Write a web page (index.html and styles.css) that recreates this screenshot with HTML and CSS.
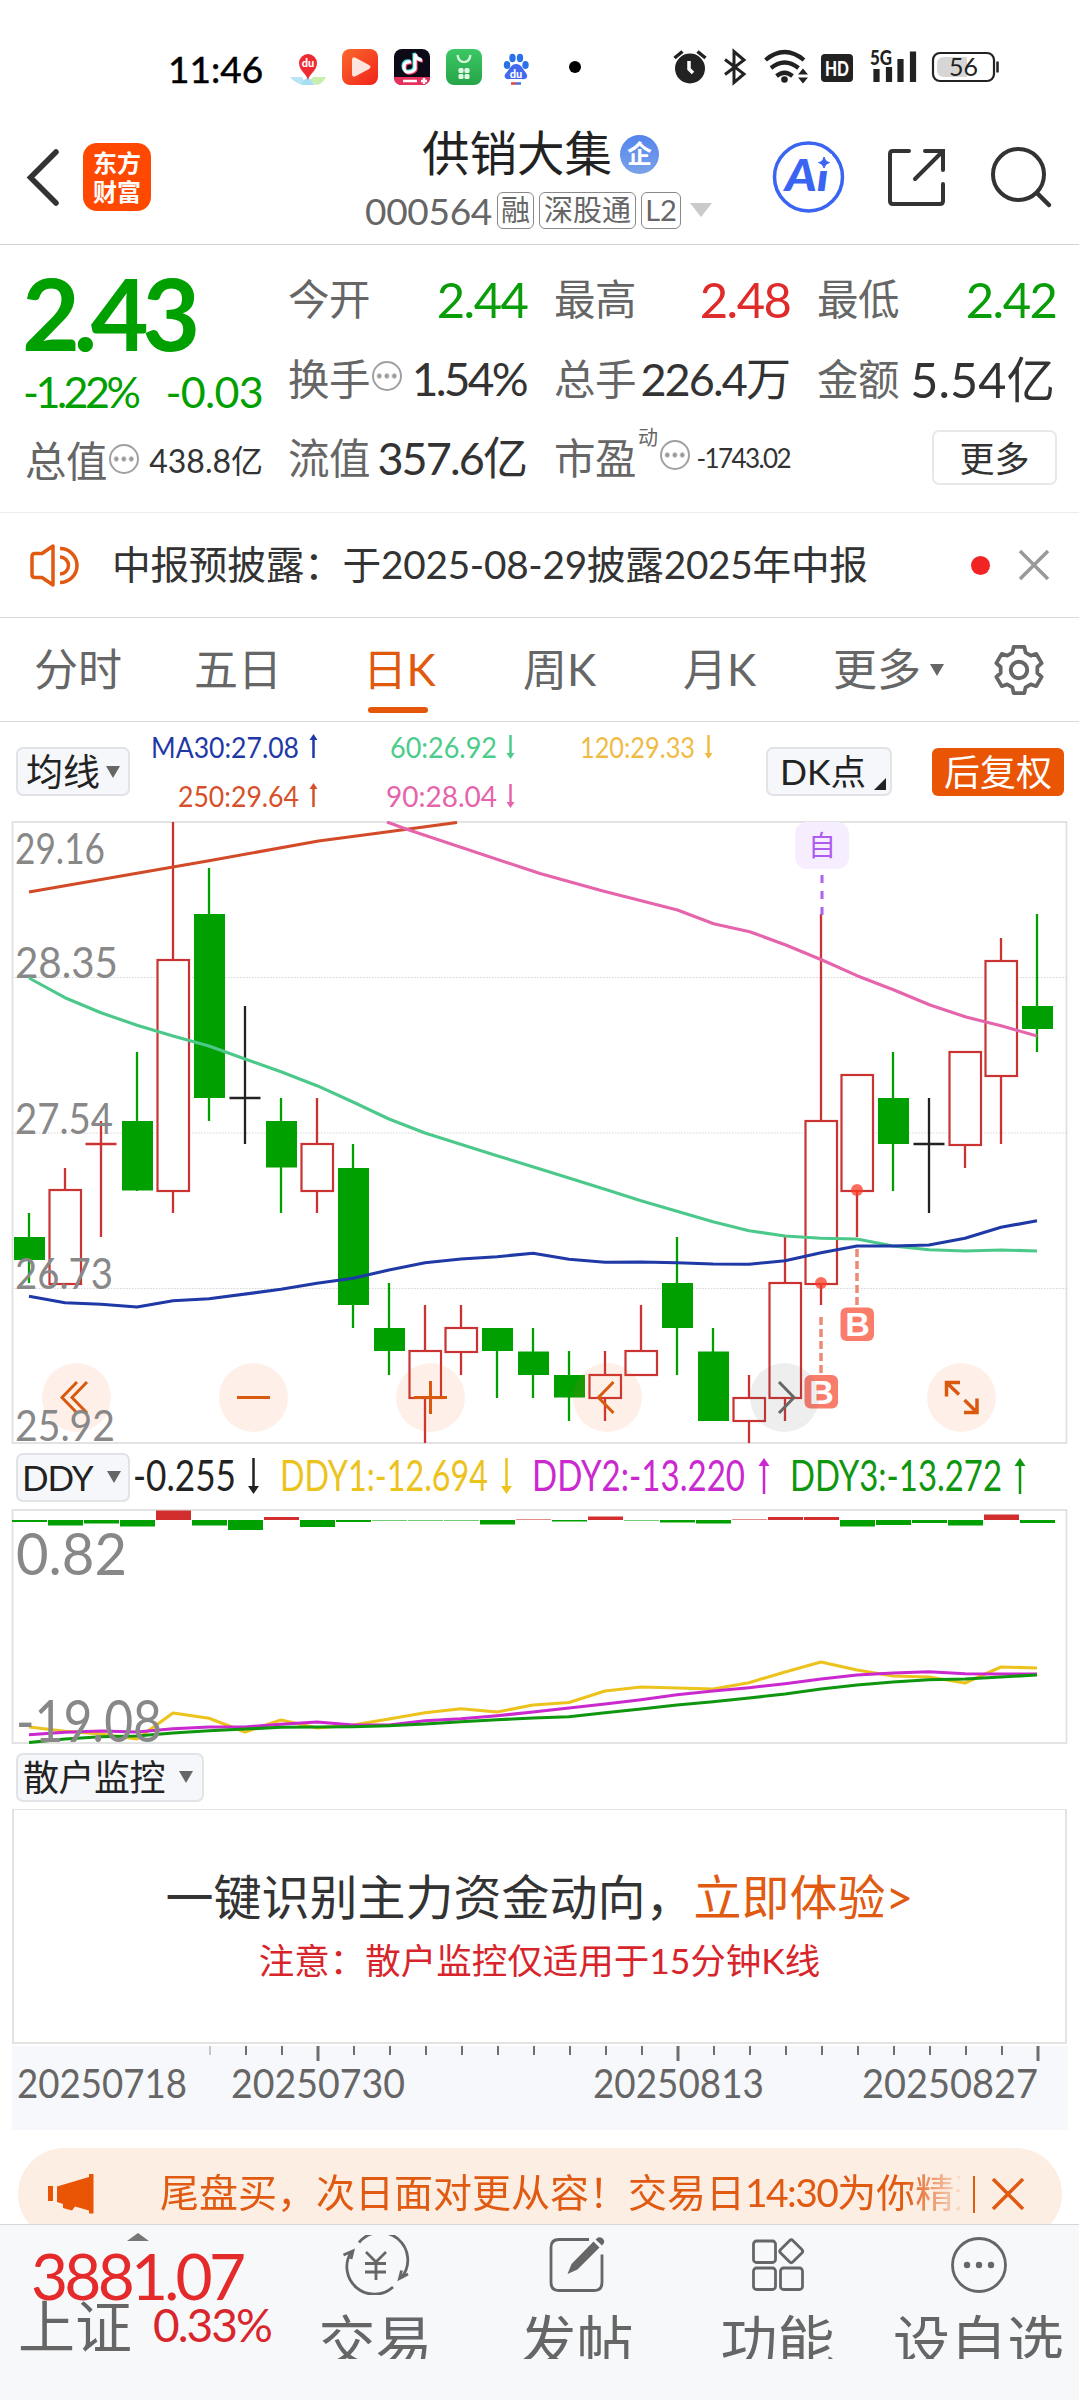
FILE: index.html
```html
<!DOCTYPE html>
<html lang="zh-CN">
<head>
<meta charset="utf-8">
<title>供销大集 000564</title>
<link rel="stylesheet" href="styles.css">
</head>
<body>
<div class="screen">

  <div class="status">
    <span class="clock">11:46</span>
    <svg class="status-icons" width="819" height="60" viewBox="260 40 819 60">
      <defs>
        <linearGradient id="gPlay" x1="0" y1="0" x2="1" y2="1"><stop offset="0" stop-color="#fb6a2c"/><stop offset="1" stop-color="#f0221a"/></linearGradient>
        <linearGradient id="gShop" x1="0" y1="0" x2="0" y2="1"><stop offset="0" stop-color="#3cc765"/><stop offset="1" stop-color="#27a548"/></linearGradient>
      </defs>
      <path d="M290 79h12l4 8q-11-1-16-8z" fill="#b9e4f5"/><path d="M313 79h13q-3 7-10 8l-6-5z" fill="#c8efb0"/><path d="M304 82l4-3 7 8h-14z" fill="#a8def2"/>
      <path d="M308 82c-1-6-9-9-9-17a9 9 0 0 1 18 0c0 8-8 11-9 17z" fill="#ee2b33"/>
      <text x="308" y="69" class="mini-du" fill="#fff">du</text>
      <rect x="342" y="51" width="36" height="36" rx="8" fill="url(#gPlay)"/><path d="M352 62q0-4 4-2l13 7q3 2 0 4l-13 7q-4 2-4-2z" fill="#fff" opacity=".85"/>
      <rect x="394" y="51" width="36" height="36" rx="8" fill="#0c0a16"/>
      <path d="M394 79h36q0 8-8 8h-20q-8 0-8-8z" fill="#e8305e"/>
      <g fill="none" stroke-width="3.2"><path d="M411 64q-7-1-7 5t6 5 5-6v-12q2 6 7 6" stroke="#3be2e6" transform="translate(-1 -1)"/><path d="M411 64q-7-1-7 5t6 5 5-6v-12q2 6 7 6" stroke="#f2406a" transform="translate(1 1)"/><path d="M411 64q-7-1-7 5t6 5 5-6v-12q2 6 7 6" stroke="#fff"/></g>
      <path d="M403 83h14M424 80v6M421 83h6" stroke="#fff" stroke-width="2.4"/>
      <rect x="446" y="51" width="36" height="36" rx="8" fill="url(#gShop)"/>
      <path d="M457.500 57q1 7 6.500 7t6.500-7" fill="none" stroke="#d8f8df" stroke-width="2.200"/>
      <g fill="#e2fbe8"><rect x="458.500" y="70" width="5" height="5" rx="1.500"/><rect x="464.500" y="70" width="5" height="5" rx="1.500"/><rect x="458.500" y="76" width="5" height="5" rx="1.500"/><rect x="464.500" y="76" width="5" height="5" rx="1.500"/></g>
      <g fill="#2a72ea"><ellipse cx="507" cy="67" rx="3.200" ry="4"/><ellipse cx="512.500" cy="60" rx="3.200" ry="4.200"/><ellipse cx="520" cy="60" rx="3.200" ry="4.200"/><ellipse cx="525.500" cy="67" rx="3.200" ry="4"/></g>
      <path d="M516 66c5 0 7 5 10 9s0 7-4 6h-12c-5 1-7-3-4-6s5-9 10-9z" fill="#4468ee"/>
      <text x="516" y="80" class="mini-du" fill="#fff">du</text>
      <path d="M511 85.500h5" stroke="#d4483f" stroke-width="2.500"/><path d="M516 85.500h5" stroke="#4a6fe0" stroke-width="2.500"/>
      <circle cx="575" cy="69" r="6" fill="#000"/>
      <g fill="#222">
        <circle cx="690" cy="70.500" r="15"/>
        <path d="M674.500 60l8-6.500M705.500 60l-8-6.500" stroke="#222" stroke-width="3.500"/>
        <path d="M689 63v8l4 4" fill="none" stroke="#fff" stroke-width="3.500"/>
        <path d="M725 61.500l19 14.500-10 8.500v-31l10 8.500-19 14.500" fill="none" stroke="#222" stroke-width="3"/>
        <g fill="none" stroke="#222" stroke-width="4.200"><path d="M765.500 62q19-16 38.500 0"/><path d="M771 70q13.500-11 27.500 0"/><path d="M776.500 78q8-6.500 16 0"/></g>
        <circle cx="784.500" cy="81.500" r="3.300"/>
        <path d="M798 76.500l5-6 5 6zM798 79.500l5 6 5-6z"/>
        <rect x="821" y="56" width="32" height="28" rx="4"/>
      </g>
      <text x="837" y="77.500" class="hd" textLength="24" lengthAdjust="spacingAndGlyphs">HD</text>
      <text x="870" y="67" class="five-g" textLength="22" lengthAdjust="spacingAndGlyphs">5G</text>
      <path d="M876.500 71v13M889 69v15M900.500 61v23M913 53.500v30.500" stroke="#222" stroke-width="6.200"/>
      <rect x="933" y="55" width="61" height="28" rx="7" fill="#fff" stroke="#222" stroke-width="2.200"/>
      <path d="M967 59h-23q-7 0-7 7v6q0 7 7 7h23z" fill="#d6d6d6"/>
      <path d="M997.500 63.500v11" stroke="#222" stroke-width="2.500"/>
      <text x="963.500" y="78" class="batt">56</text>
    </svg>
  </div>

  <header class="header">
    <div class="head-left">
      <svg width="34" height="60" viewBox="26 147 34 60"><path d="M56 152L30.500 177.500L56 203" fill="none" stroke="#333" stroke-width="5.500" stroke-linecap="round"/></svg>
      <div class="logo"><span>东方</span><span>财富</span></div>
    </div>
    <div class="head-mid">
      <div class="title-row"><h1>供销大集</h1><span class="ent">企</span></div>
      <div class="code-row"><span class="code">000564</span><span class="tag">融</span><span class="tag wide">深股通</span><span class="tag l2">L2</span><i class="caret"></i></div>
    </div>
    <svg class="head-right" width="307" height="80" viewBox="772 137 307 80">
      <circle cx="808.500" cy="177" r="34" fill="#fff" stroke="#3a64f2" stroke-width="3.500"/>
      <text x="785" y="191" class="ai" textLength="44" lengthAdjust="spacingAndGlyphs">Ai</text>
      <path d="M817 154h15v17h-15z" fill="#fff"/><path d="M824 157q1.500 5 5.500 5.500q-4.500 1-5.500 5.500q-1-4.500-5.500-5.500q4.500-.5 5.500-5.500z" fill="#3a64f2" stroke="#3a64f2" stroke-width="1"/>
      <g fill="none" stroke="#333" stroke-width="4" stroke-linecap="round"><path d="M909 151h-16q-3 0-3 3v47q0 3 3 3h47q3 0 3-3v-17"/><path d="M925 151h18v19M942 152l-27 27"/></g>
      <circle cx="1018.500" cy="174.500" r="25.500" fill="none" stroke="#333" stroke-width="4"/><path d="M1037 193l12 12" stroke="#333" stroke-width="4.500" stroke-linecap="round"/>
    </svg>
  </header>

  <section class="quote">
    <div class="price-col">
      <div class="price">2.43</div>
      <div class="change"><span class="pct">-1.22%</span><span class="diff">-0.03</span></div>
      <div class="cell r3"><label>总值</label><i class="info"></i><b class="v32">438.8亿</b></div>
    </div>
    <div class="stats">
      <div class="cell"><label>今开</label><b class="v49 down">2.44</b></div>
      <div class="cell"><label>最高</label><b class="v49 up">2.48</b></div>
      <div class="cell"><label>最低</label><b class="v49 down">2.42</b></div>
      <div class="cell"><label>换手</label><i class="info"></i><b class="v46">1.54%</b></div>
      <div class="cell"><label>总手</label><b class="v45">226.4万</b></div>
      <div class="cell"><label>金额</label><b class="v48">5.54亿</b></div>
      <div class="cell r3"><label>流值</label><b class="v45">357.6亿</b></div>
      <div class="cell r3"><label>市盈</label><sup>动</sup><i class="info"></i><b class="v26">-1743.02</b></div>
      <div class="cell r3"><button class="more-btn">更多</button></div>
    </div>
  </section>

  <section class="notice">
    <svg width="54" height="48" viewBox="28 540 54 48" fill="none" stroke="#e05a12" stroke-width="3.500" stroke-linejoin="round"><path d="M53 545v39l-11-7.500h-7q-3 0-3-3v-18q0-3 3-3h7z"/><path d="M60 547.500a16.500 16.500 0 0 1 0 34M60 556a8.500 8.500 0 0 1 0 17"/></svg>
    <p>中报预披露：于2025-08-29披露2025年中报</p>
    <i class="dot"></i>
    <svg width="32" height="32" viewBox="0 0 32 32"><path d="M2 2l28 28M30 2L2 30" stroke="#999" stroke-width="3.500"/></svg>
  </section>

  <nav class="tabs">
    <span>分时</span><span>五日</span><span class="on">日K</span><span>周K</span><span>月K</span><span class="more">更多<i class="tri"></i></span>
    <svg width="54" height="54" viewBox="-27 -27 54 54" fill="none" stroke="#666" stroke-width="4"><path transform="scale(.94)" stroke-linejoin="round" d="M-7-18.500L-5.700-24.500H5.700L7-18.500L12.500-15.300L18.400-17.200L24.100-7.300L19.500-3.200V3.200L24.100 7.300L18.400 17.200L12.500 15.300L7 18.500L5.700 24.500H-5.700L-7 18.500L-12.500 15.300L-18.400 17.200L-24.100 7.300L-19.500 3.200V-3.200L-24.100-7.300L-18.400-17.200L-12.500-15.300Z"/><circle r="8.200"/></svg>
  </nav>

  <section class="toolbar">
    <button class="chip">均线<i class="tri"></i></button>
    <svg class="legend" width="580" height="99" viewBox="145 722 580 99">
      <g fill="#1f39a6" stroke="#1f39a6"><text x="151" y="757.500" textLength="148" lengthAdjust="spacingAndGlyphs">MA30:27.08</text><path d="M313.500 738v20"/><path class="tip" d="M309.500 740l4-6 4 6z"/></g>
      <g fill="#4ccb8a" stroke="#4ccb8a"><text x="390" y="757.500" textLength="107" lengthAdjust="spacingAndGlyphs">60:26.92</text><path d="M510.500 735v20"/><path class="tip" d="M506.500 753l4 6 4-6z"/></g>
      <g fill="#efbb45" stroke="#efbb45"><text x="580" y="757.500" textLength="115" lengthAdjust="spacingAndGlyphs">120:29.33</text><path d="M708.500 735v20"/><path class="tip" d="M704.500 753l4 6 4-6z"/></g>
      <g fill="#d6502b" stroke="#d6502b"><text x="178" y="806.500" textLength="121" lengthAdjust="spacingAndGlyphs">250:29.64</text><path d="M313.500 787v20"/><path class="tip" d="M309.500 789l4-6 4 6z"/></g>
      <g fill="#e564ab" stroke="#e564ab"><text x="386" y="806.500" textLength="111" lengthAdjust="spacingAndGlyphs">90:28.04</text><path d="M510.500 784v20"/><path class="tip" d="M506.500 802l4 6 4-6z"/></g>
    </svg>
    <button class="chip dk">DK点<i class="corner"></i></button>
    <button class="adj">后复权</button>
  </section>

  <svg class="plot" width="1079" height="623" viewBox="0 821 1079 623">
    <rect x="12.500" y="822" width="1054" height="621" fill="#fff" stroke="#e0e0e0" stroke-width="1.800"/>
    <path d="M12 977.500H1067M12 1133H1067M12 1288.500H1067" stroke="#d4d4d4" stroke-width="1" stroke-dasharray="1.500 1.500"/>
    <g id="candles"></g>
    <g class="axis" font-size="43">
      <text x="15" y="864" textLength="90" lengthAdjust="spacingAndGlyphs">29.16</text>
      <text x="15" y="977.500" textLength="103" lengthAdjust="spacingAndGlyphs">28.35</text>
      <text x="15" y="1133.500" textLength="98" lengthAdjust="spacingAndGlyphs">27.54</text>
      <text x="15" y="1289" textLength="98" lengthAdjust="spacingAndGlyphs">26.73</text>
    </g>
    <g id="averages" fill="none" stroke-width="3.100" stroke-linejoin="round"></g>
    <rect x="795" y="822" width="54" height="47" rx="12" fill="#f6edff"/>
    <text x="822" y="856" class="zi">自</text>
    <path d="M822 875v40" stroke="#ad63ec" stroke-width="3" stroke-dasharray="8 8"/>
    <g stroke="#ef8877" stroke-width="3.500" stroke-dasharray="8 4"><path d="M857 1249v56M821 1317v57"/></g>
    <g fill="#fb3c28" fill-opacity=".75"><circle cx="857" cy="1190" r="6"/><circle cx="821" cy="1283" r="6"/></g>
    <g fill="#fa7d6c"><rect x="840.500" y="1307.500" width="33.500" height="33.500" rx="6"/><rect x="804.500" y="1375" width="33.500" height="33.500" rx="6"/></g>
    <text x="857.500" y="1336" class="buy">B</text><text x="821.500" y="1403.500" class="buy">B</text>
    <g fill="#f96a1e" fill-opacity=".1"><circle cx="76.500" cy="1397.500" r="34.500"/><circle cx="253.500" cy="1397.500" r="34.500"/><circle cx="430.500" cy="1397.500" r="34.500"/><circle cx="607.500" cy="1397.500" r="34.500"/><circle cx="784.500" cy="1397.500" r="34.500" fill="#555"/><circle cx="961.500" cy="1397.500" r="34.500"/></g>
    <g fill="none" stroke="#d9590f" stroke-width="3"><path d="M77 1382l-15 15.500 15 15.500M87 1382l-15 15.500 15 15.500"/><path d="M237 1397.500h33M414 1397.500h33M430.500 1381v33"/><path d="M613.500 1382l-15 15.500 15 15.500"/><path d="M779 1382l15 15.500-15 15.500" stroke="#666"/></g>
    <g fill="none" stroke="#d9590f" stroke-width="3.500"><path d="M960 1382.500h-13.500v14M947 1383l12 11.500M964 1412.500h13v-14M976.500 1412l-12-12"/></g>
    <text class="axis" font-size="43" x="15" y="1441" textLength="100" lengthAdjust="spacingAndGlyphs">25.92</text>
  </svg>

  <section class="sub-head">
    <button class="chip">DDY<i class="tri"></i></button>
    <svg class="ddy" width="949" height="60" viewBox="130 1446 949 60">
      <g fill="#222" stroke="#222"><text x="133" y="1491" textLength="103" lengthAdjust="spacingAndGlyphs">-0.255</text><path d="M253.500 1458v30"/><path class="tip" d="M248 1486h11l-5.500 8z"/></g>
      <g fill="#ecc31d" stroke="#ecc31d"><text x="280" y="1491" textLength="208" lengthAdjust="spacingAndGlyphs">DDY1:-12.694</text><path d="M506.500 1458v30"/><path class="tip" d="M501 1486h11l-5.500 8z"/></g>
      <g fill="#ca29cf" stroke="#ca29cf"><text x="532" y="1491" textLength="213" lengthAdjust="spacingAndGlyphs">DDY2:-13.220</text><path d="M764 1464v30"/><path class="tip" d="M758.500 1466h11l-5.500-8z"/></g>
      <g fill="#0f960f" stroke="#0f960f"><text x="790" y="1491" textLength="212" lengthAdjust="spacingAndGlyphs">DDY3:-13.272</text><path d="M1020 1464v30"/><path class="tip" d="M1014.500 1466h11l-5.500-8z"/></g>
    </svg>
  </section>

  <svg class="plot" width="1079" height="235" viewBox="0 1509 1079 235">
    <rect x="12.500" y="1510" width="1054" height="233" fill="#fff" stroke="#e0e0e0" stroke-width="1.800"/>
    <g id="bars"></g>
    <g id="ddyLines" fill="none" stroke-width="3.100" stroke-linejoin="round"></g>
    <g class="axis" font-size="59">
      <text x="16" y="1575" textLength="111" lengthAdjust="spacingAndGlyphs">0.82</text>
      <text x="16" y="1742" textLength="146" lengthAdjust="spacingAndGlyphs">-19.08</text>
    </g>
  </svg>

  <section class="sub-head third"><button class="chip">散户监控<i class="tri"></i></button></section>

  <section class="promo">
    <p class="big">一键识别主力资金动向，<a>立即体验&gt;</a></p>
    <p class="note">注意：散户监控仅适用于15分钟K线</p>
  </section>

  <svg class="dates" width="1079" height="84" viewBox="0 2046 1079 84">
    <rect x="12" y="2046" width="1056" height="84" fill="#f7f8fb"/>
    <g id="ticks" stroke="#6e6e6e"></g>
    <text x="17" y="2098" textLength="170" lengthAdjust="spacingAndGlyphs">20250718</text>
    <text x="231" y="2098" textLength="174" lengthAdjust="spacingAndGlyphs">20250730</text>
    <text x="593" y="2098" textLength="171" lengthAdjust="spacingAndGlyphs">20250813</text>
    <text x="862" y="2098" textLength="176" lengthAdjust="spacingAndGlyphs">20250827</text>
  </svg>

  <div class="ad-clip">
    <div class="ad">
      <svg width="46" height="40" viewBox="48 2173 46 40" fill="#e95504"><path d="M48 2185h5v15h-5zM57 2185.500l32-9.500v-3h4.500v39.500h-4.500v-3l-14-4-3 4-9-2.500v-4l-6-2z"/></svg>
      <p>尾盘买，次日面对更从容！交易日<span>14:30</span>为你精选</p>
      <i class="bar"></i>
      <svg width="32" height="32" viewBox="0 0 32 32"><path d="M1 1l30 30M31 1L1 31" stroke="#e05a12" stroke-width="3.500"/></svg>
    </div>
  </div>

  <footer class="bottom">
    <div class="index">
      <i class="up-tri"></i>
      <div class="idx-val">3881.07</div>
      <div class="idx-row"><span>上证</span><b>0.33%</b></div>
    </div>
    <div class="nav">
      <svg width="70" height="60" viewBox="341 2234 70 60" fill="none" stroke="#666" stroke-width="2.800"><path d="M359 2241.500a27.500 27.500 0 0 1 42.500 35"/><path d="M393 2286a27.500 27.500 0 0 1-41.500-35.500"/><path d="M343.500 2254l9.500-4-2 8M408 2273l-8.500 4.500 2-8"/><path d="M366 2251l10 10 10-10M376 2261v18M365 2262.500h21M365 2271h21"/></svg>
      <span>交易</span>
    </div>
    <div class="nav">
      <svg width="60" height="60" viewBox="547 2234 60 60" fill="none" stroke="#666" stroke-width="2.800"><path d="M589 2238.500h-30q-8 0-8 8v35q0 8 8 8h35q8 0 8-8v-28"/><path d="M567.500 2273l4-10 22-22.500 6 6-22 22z" fill="#666" stroke="none"/><path d="M595.500 2238.500l2.500-2q4-1 6 3 1 2-2 5z" fill="#666" stroke="none"/></svg>
      <span>发帖</span>
    </div>
    <div class="nav">
      <svg width="60" height="60" viewBox="748 2234 60 60" fill="none" stroke="#666" stroke-width="2.800"><rect x="753.500" y="2240" width="22" height="21.500" rx="3"/><rect x="753.500" y="2267" width="22" height="21.500" rx="3"/><rect x="780.500" y="2267" width="22" height="21.500" rx="3"/><rect x="782.500" y="2241.500" width="17.500" height="17.500" rx="2.500" transform="rotate(45 791.250 2250.250)"/></svg>
      <span>功能</span>
    </div>
    <div class="nav">
      <svg width="60" height="60" viewBox="949 2234 60 60"><circle cx="979" cy="2264" r="26.500" fill="none" stroke="#666" stroke-width="2.800"/><g fill="#666"><circle cx="967" cy="2264" r="3.200"/><circle cx="979" cy="2264" r="3.200"/><circle cx="991" cy="2264" r="3.200"/></g></svg>
      <span>设自选</span>
    </div>
  </footer>
</div>
<script src="chart.js"></script>
</body>
</html>
```
FILE: styles.css
```css
* { box-sizing: border-box; }
body { margin: 0; background: #fff; font-family: Lato, "Noto Sans CJK SC", sans-serif; color: #333; }
h1, p { margin: 0; font-weight: 400; }
button { font-family: inherit; margin: 0; padding: 0; border: 0; background: none; color: inherit; }
svg { display: block; flex: none; }
.screen { width: 1079px; height: 2400px; overflow: hidden; display: flex; flex-direction: column; }
.screen > * { flex: none; }

.status { height: 104px; display: flex; align-items: center; padding-top: 36px; padding-bottom: 4px; }
.clock { width: 260px; padding-left: 168px; padding-top: 1px; font-size: 37px; line-height: 60px; color: #000; white-space: nowrap; -webkit-text-stroke: .5px #000; letter-spacing: 0; }
.mini-du { font-size: 11px; font-weight: 900; text-anchor: middle; }
.hd { font-size: 21px; font-weight: 900; text-anchor: middle; fill: #fff; }
.five-g { font-size: 20px; font-weight: 900; fill: #222; }
.batt { font-size: 25px; text-anchor: middle; fill: #222; }
.ai { font-size: 43px; font-weight: 900; font-style: italic; fill: #3a64f2; }

.header { height: 141px; border-bottom: 1.500px solid #d2d2d2; display: grid; grid-template-columns: 365px 407px 307px; }
.head-left { display: flex; align-items: center; padding: 5px 0 0 26px; gap: 23px; }
.logo { width: 68px; height: 68px; border-radius: 14px; background: #ff4800; color: #fff; display: flex; flex-direction: column; align-items: center; justify-content: center; font-size: 24px; line-height: 29px; font-weight: 700; }
.head-mid { display: flex; flex-direction: column; padding-top: 19px; }
.title-row { display: flex; align-items: center; height: 60px; padding-left: 57px; gap: 8px; }
h1 { font-size: 47.500px; line-height: 60px; color: #222; }
.ent { width: 39px; height: 39px; margin-top: 2px; border-radius: 50%; background: linear-gradient(#5484ee, #7aa2e8); color: #fff; font-size: 25px; line-height: 37px; text-align: center; font-weight: 700; }
.code-row { display: flex; align-items: center; height: 58px; margin-top: -2px; color: #666; }
.code { font-size: 37px; width: 132px; letter-spacing: -.3px; }
.tag { height: 37px; width: 37px; border: 1.500px solid #888; border-radius: 6px; font-size: 29px; line-height: 33px; text-align: center; margin-right: 5px; white-space: nowrap; }
.tag.wide { width: 97px; }
.tag.l2 { width: 40px; }
.caret { margin-left: 4px; border: 11px solid transparent; border-bottom: 0; border-top: 14px solid #cacaca; }
.head-right { margin-top: 33px; }

.quote { height: 268px; border-bottom: 1.500px solid #ededed; display: grid; grid-template-columns: 263px 766px; column-gap: 25px; }
.price-col { padding: 14px 0 0 25px; color: #00a000; }
.price { font-size: 100px; line-height: 106px; font-weight: 700; letter-spacing: -6.500px; margin-left: -3px; }
.change { display: flex; justify-content: space-between; line-height: 53px; font-size: 43px; }
.pct { letter-spacing: -3.500px; margin-left: -2px; }
.diff { letter-spacing: -.7px; }
.stats { display: grid; grid-template-columns: 238px 235px 238px; column-gap: 28px; grid-template-rows: 107px 53px 107px; }
.cell { display: flex; align-items: center; white-space: nowrap; }
.cell label { font-size: 41.500px; line-height: 60px; color: #666; letter-spacing: -.5px; }
.cell b { margin-left: auto; font-weight: 400; color: #333; line-height: 60px; }
.cell b.down { color: #0a9d0a; }
.cell b.up { color: #e02b2b; }
.price-col .r3 { height: 86px; }
.stats .r3 { height: 105px; }
.info { width: 30px; height: 30px; margin-left: 2px; margin-top: -5px; border-radius: 50%; border: 2.500px solid #a0a0a0; background: radial-gradient(circle, #999 2px, transparent 2.700px) center / 7.500px 25px content-box; padding: 0 1.200px; }
.v49 { font-size: 49px; letter-spacing: -1.500px; margin-right: -1.500px; }
.cell .v48 { font-size: 48.500px; letter-spacing: .1px; }
.cell .v46 { font-size: 46px; letter-spacing: -2.700px; margin-right: 0; }
.v45 { font-size: 45px; letter-spacing: -1.900px; margin-right: 0; }
.v32 { font-size: 32px; }
.v26 { font-size: 26px; letter-spacing: -1.600px; margin-right: -1px; }
.cell sup { font-size: 20px; line-height: 20px; margin: -42px 0 0 2px; color: #666; vertical-align: baseline; }
.more-btn { width: 125px; height: 55px; margin: 0 -2px 0 auto; border: 2px solid #e8e8e8; border-radius: 7px; font-size: 35px; line-height: 50px; color: #333; }

.notice { height: 105px; border-bottom: 1.500px solid #dadada; display: flex; align-items: center; padding: 0 28px; }
.notice p { margin-left: 30px; width: 859px; padding-bottom: 2px; font-size: 38.700px; line-height: 60px; letter-spacing: -.25px; white-space: nowrap; }
.dot { width: 19px; height: 19px; border-radius: 50%; background: #f22323; margin-right: 28px; }

.tabs { height: 104px; border-bottom: 1.500px solid #dadada; display: grid; grid-template-columns: 160px 173px 156px 160px 150px 159px 1fr; padding-left: 34px; font-size: 44px; line-height: 101px; color: #666; align-items: center; white-space: nowrap; }
.tabs .on { color: #e05a0e; position: relative; margin-left: -4px; letter-spacing: -.5px; }
.tabs .on::after { content: ""; position: absolute; left: 5px; top: 88px; width: 60px; height: 6px; border-radius: 4px; background: #e4560a; }
.tri { display: inline-block; border: 7.500px solid transparent; border-bottom: 0; border-top: 12px solid #666; }
.tabs .tri { margin-left: 9px; vertical-align: 10px; }

.toolbar { height: 99px; display: flex; padding-left: 16px; align-items: flex-start; }
.chip { height: 49px; border: 2px solid #e1e3e6; border-radius: 7px; background: #f6f7fa; color: #222; font-size: 37px; line-height: 44px; display: flex; align-items: center; white-space: nowrap; }
.toolbar .chip { width: 114px; margin-top: 25px; padding-left: 8px; gap: 6px; }
.legend { margin-left: 15px; font-size: 29px; }
.legend path, .ddy path { stroke-width: 2.500px; }
svg text { stroke: none; }
.legend .tip, .ddy .tip { stroke: none; }
.toolbar .dk { width: 126px; margin-left: 41px; padding-left: 12px; font-size: 35.500px; position: relative; }
.dk .corner { position: absolute; right: 4px; bottom: 4px; border-left: 12px solid transparent; border-bottom: 12px solid #222; }
.adj { margin: 26px 0 0 40px; width: 132px; height: 48px; border-radius: 6px; background: #e95504; color: #fff; font-size: 36px; line-height: 45px; }

.axis { fill: #888; }
.zi { font-size: 28px; text-anchor: middle; fill: #ad5cf0; }
.buy { font-size: 34px; font-weight: 700; text-anchor: middle; fill: #fff; font-family: "Liberation Sans", sans-serif; }

.sub-head { height: 65px; display: flex; padding: 9px 0 0 16px; }
.sub-head .chip { width: 114px; padding: 0 0 2px 4px; font-size: 35px; gap: 14px; letter-spacing: -1px; }
.ddy { margin-top: -7px; font-size: 42px; }
.third .chip { width: 188px; letter-spacing: -.5px; font-size: 36px; padding-left: 5px; }

.promo { height: 235px; margin: 0 12px; border: 2px solid #e3e3e3; border-top-width: 1px; text-align: center; padding-top: 57px; }
.big { font-size: 48px; line-height: 60px; white-space: nowrap; }
.big a { color: #e05a12; }
.note { margin-top: 4px; font-size: 35.500px; line-height: 60px; color: #d8252b; }

.dates { margin-top: 2px; font-size: 40px; fill: #666; }

.ad-clip { height: 94px; padding: 18px 17px 0 18px; overflow: hidden; }
.ad { height: 92px; border-radius: 46px; background: #fdeee4; display: flex; align-items: center; padding-left: 30px; color: #e05a12; }
.ad p { margin-left: 66px; width: 800px; font-size: 39px; line-height: 60px; white-space: nowrap; overflow: hidden; -webkit-mask-image: linear-gradient(90deg, #000 745px, transparent 808px); mask-image: linear-gradient(90deg, #000 745px, transparent 808px); padding-bottom: 4px; }
.ad p span { letter-spacing: -1.600px; }
.ad .bar { width: 1.500px; height: 37px; margin: 0 17px 0 13px; background: #e05a12; }

.bottom { height: 176px; border-top: 1.500px solid #d4d8dc; background: #f7f8fa; display: grid; grid-template-columns: 275px repeat(4, 201px); padding-bottom: 40px; }
.bottom > div { height: 134px; overflow: hidden; }
.index { display: flex; flex-direction: column; }
.up-tri { width: 0; margin: 8px 0 0 127px; border: 11px solid transparent; border-top: 0; border-bottom: 8px solid #777; }
.idx-val { margin: 5px 0 0 31px; font-size: 64px; line-height: 60px; color: #e42a2a; letter-spacing: -3.800px; }
.idx-row { display: flex; align-items: center; margin: -10px 0 0 18px; color: #666; }
.idx-row span { font-size: 57px; line-height: 60px; }
.idx-row b { margin: -3px 0 0 21px; font-weight: 400; font-size: 46px; line-height: 60px; color: #d8262c; letter-spacing: -2px; }
.nav { display: flex; flex-direction: column; align-items: center; padding-top: 10px; color: #666; }
.nav span { margin-top: 16px; font-size: 57px; line-height: 60px; white-space: nowrap; }
```
FILE: chart.js
```js
const X = i => 29 + 36 * i;
const NS = 'http://www.w3.org/2000/svg';
const add = (id, tag, attrs) => {
  const el = document.createElementNS(NS, tag);
  for (const k in attrs) el.setAttribute(k, attrs[k]);
  document.getElementById(id).appendChild(el);
};

// kind (g down, r up, k flat), body top, body bottom, wick top, wick bottom
const candles = [
  ['g', 1237, 1260, 1213, 1283], ['r', 1190, 1284, 1168, 1284], ['r', 1144, 1144, 1121, 1237],
  ['g', 1121, 1190.5, 1052, 1191], ['r', 960, 1191, 822, 1213], ['g', 914, 1098, 868, 1121],
  ['k', 1098, 1098, 1006, 1144], ['g', 1121, 1167.5, 1098, 1213], ['r', 1144, 1191, 1098, 1213],
  ['g', 1168, 1305, 1144, 1328], ['g', 1328, 1351, 1283, 1375], ['r', 1351, 1398, 1305, 1443],
  ['r', 1328, 1352, 1305, 1375], ['g', 1328, 1351, 1328, 1398], ['g', 1351.5, 1375, 1328, 1398],
  ['g', 1375, 1397.5, 1351, 1421], ['r', 1375, 1398, 1351, 1421], ['r', 1351, 1375, 1305, 1375],
  ['g', 1283, 1328, 1237, 1375], ['g', 1351.5, 1421, 1328, 1421], ['r', 1398, 1421, 1375, 1443],
  ['r', 1283, 1398, 1237, 1421], ['r', 1121, 1284, 914, 1305], ['r', 1075, 1191, 1075, 1237],
  ['g', 1098, 1144, 1052, 1191], ['k', 1144, 1144, 1098, 1213], ['r', 1052, 1145, 1052, 1168],
  ['r', 961, 1076, 938, 1144], ['g', 1006, 1029, 914, 1052]
];
const tint = { g: '#00a000', r: '#c93432', k: '#222' };
candles.forEach(([kind, top, bottom, hi, lo], i) => {
  add('candles', 'path', { d: `M${X(i)} ${hi}V${lo}`, stroke: tint[kind], 'stroke-width': 2.3 });
  if (top === bottom) add('candles', 'path', { d: `M${X(i) - 15.5} ${top}h31`, stroke: tint[kind], 'stroke-width': 2.5 });
  else if (kind === 'g') add('candles', 'rect', { x: X(i) - 15, y: top, width: 31, height: bottom - top, fill: tint.g });
  else add('candles', 'rect', { x: X(i) - 15.5, y: top, width: 31.5, height: bottom - top, fill: '#fff', stroke: tint.r, 'stroke-width': 2.2 });
});

const line = (id, color, points) => add(id, 'polyline', { points, stroke: color });
line('averages', '#d34a28', '29,892 173,867 209,860.7 318.5,841 379,833 457,822.5');
line('averages', '#e564ab', '387,822 406,829 540,873.5 602,890.7 677.5,910 713.6,923.7 749.7,931.7 785.8,945 822,960 857,975.7 894,990 930,1005 966,1017 1002,1026 1037,1036');
line('averages', '#4cc98a', '29,978 65,997.7 101,1012.7 137,1025.3 173,1036 209,1046 245,1059 281,1071.7 317,1085.7 353,1102 389,1119 425,1133 497,1155.7 540,1169 605,1189.3 641,1200.7 713,1221.7 749,1230.7 785,1236 821,1238.3 857,1239 893,1246 929,1249.7 965,1251 1001,1250 1037,1251');
line('averages', '#1f39a6', '29,1296.3 65,1302.7 101,1304.3 137,1307 173,1300.7 209,1298.7 281,1289.3 317,1283.3 353,1278.3 389,1270 425,1262.7 461,1259 497,1256.7 533,1253.3 569,1259.3 605,1262.3 641,1262 677,1262.7 713,1264 749,1264.3 785,1260.7 821,1252.7 857,1246 893,1246 929,1245 965,1238.3 1001,1227.3 1037,1220.7');

// positive values rise above the zero line, negative values hang below it
const flow = [-2, -5.5, -3.5, -6.5, 9.5, -5.5, -10, 3, -7, -2, -1, -1, -1, -4.5, 1, -1.5, 3.5, -1, -2.5, -3.5, 1, 3, 3, -6.5, -5, -3, -5.5, 5.5, -3];
flow.forEach((v, i) => add('bars', 'rect', {
  x: 12 + 36 * i, y: v > 0 ? 1520 - v : 1520, width: 35, height: Math.abs(v),
  fill: v > 0 ? '#d22e2e' : '#00a000', opacity: Math.abs(v) <= 1 ? 0.55 : 1
}));

const series = ys => ys.map((y, i) => `${X(i)},${y}`).join(' ');
line('ddyLines', '#ecc31d', series([1727, 1731.3, 1734, 1739, 1713, 1718.3, 1732, 1720, 1728, 1725, 1719, 1712.7, 1708.7, 1712, 1705, 1702.5, 1691, 1687, 1688, 1689, 1682.7, 1672, 1662, 1670, 1676, 1677, 1683, 1667, 1668]));
line('ddyLines', '#ca29cf', series([1734.7, 1732.3, 1731, 1732, 1728.7, 1727, 1727, 1724.3, 1722, 1725, 1725, 1720.7, 1718.7, 1715.7, 1712, 1708, 1704, 1699.7, 1694.7, 1691, 1687.7, 1683.7, 1679, 1675, 1673, 1671.7, 1673.7, 1674, 1674]));
line('ddyLines', '#0f960f', series([1742.5, 1739, 1736.7, 1736, 1733, 1730.7, 1729, 1727.3, 1727, 1726.7, 1725.7, 1724, 1721.7, 1719.7, 1718, 1716.7, 1712.7, 1709, 1705, 1701.7, 1698, 1694, 1689, 1685, 1682, 1679.7, 1679, 1677, 1675]));

for (let i = 0; i < 24; i++) {
  const long = i % 10 === 3;
  add('ticks', 'path', { d: `M${210 + 36 * i} 2046v${long ? 15 : 9}`, 'stroke-width': long ? 3 : 2, opacity: i ? 1 : 0.35 });
}
```
